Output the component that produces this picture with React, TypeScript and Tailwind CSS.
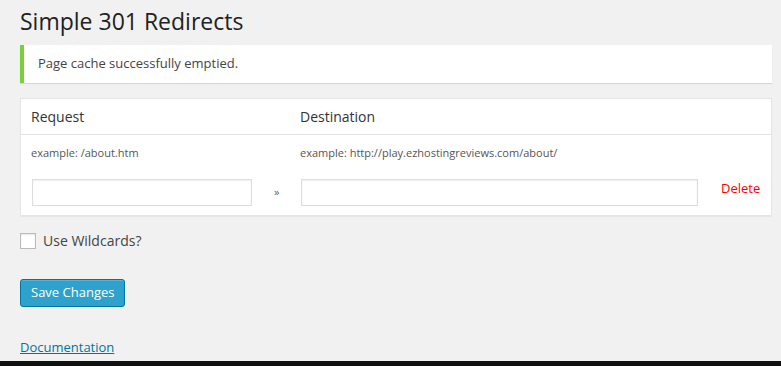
import React from 'react'

export default function App(): React.JSX.Element {
  return (
    <div
      className="w-[781px] h-[366px] bg-[#f1f1f1] text-[#444] overflow-hidden flex flex-col"
      style={{ fontFamily: '"Open Sans", sans-serif' }}
    >
      <div className="flex-1 pl-[20px] pr-[9px]">
        {/* Title */}
        <h2 className="pt-[7px] text-[23px] leading-[29px] text-[#222] font-normal">Simple 301 Redirects</h2>

        {/* Notice */}
        <div className="mt-[9px] h-[38px] flex items-center bg-white border-l-4 border-[#7ad03a] shadow-[0_1px_1px_rgba(0,0,0,0.1)] pl-[14px] text-[13px] text-[#444]">
          Page cache successfully emptied.
        </div>

        {/* Redirects table */}
        <div className="mt-[15px] bg-white border border-[#e5e5e5] shadow-[0_1px_1px_rgba(0,0,0,0.04)]">
          <div className="flex h-[36px] items-center border-b border-[#e1e1e1] text-[14px] text-[#333]">
            <div className="w-[269px] pl-[10px]">Request</div>
            <div className="pl-[10px]">Destination</div>
          </div>
          <div className="flex h-[36px] items-center text-[11px] text-[#555]">
            <div className="w-[269px] pl-[10px]">example: /about.htm</div>
            <div className="pl-[10px]">example: http://play.ezhostingreviews.com/about/</div>
          </div>
          <div className="flex items-center h-[44px] pb-[2px]">
            <div className="w-[269px] pl-[11px] flex items-center">
              <input
                type="text"
                className="w-[220px] h-[27px] border border-[#ddd] bg-white shadow-[inset_0_1px_2px_rgba(0,0,0,0.07)] outline-none"
              />
              <span className="ml-[22px] text-[11px] text-[#666]">»</span>
            </div>
            <div className="pl-[11px]">
              <input
                type="text"
                className="w-[397px] h-[27px] border border-[#ddd] bg-white shadow-[inset_0_1px_2px_rgba(0,0,0,0.07)] outline-none"
              />
            </div>
            <a className="ml-[23px] mb-[7px] text-[13px] text-[#ff0000]">Delete</a>
          </div>
        </div>

        {/* Wildcards */}
        <label className="mt-[14px] flex items-center gap-[7px] text-[14px] text-[#444]">
          <span className="w-[16px] h-[16px] bg-white border border-[#bbb] shadow-[inset_0_1px_2px_rgba(0,0,0,0.1)]" />
          Use Wildcards?
        </label>

        {/* Save */}
        <button className="mt-[28px] h-[28px] px-[10px] rounded-[3px] bg-[#2ea2cc] border border-[#0074a2] text-white text-[13px] shadow-[inset_0_1px_0_rgba(120,200,230,0.5)]">
          Save Changes
        </button>

        {/* Documentation */}
        <div className="mt-[30px] leading-[18px]">
          <a className="text-[13px] text-[#0074a2] underline">Documentation</a>
        </div>
      </div>
      <div className="h-[5px] bg-[#111]" />
    </div>
  )
}
